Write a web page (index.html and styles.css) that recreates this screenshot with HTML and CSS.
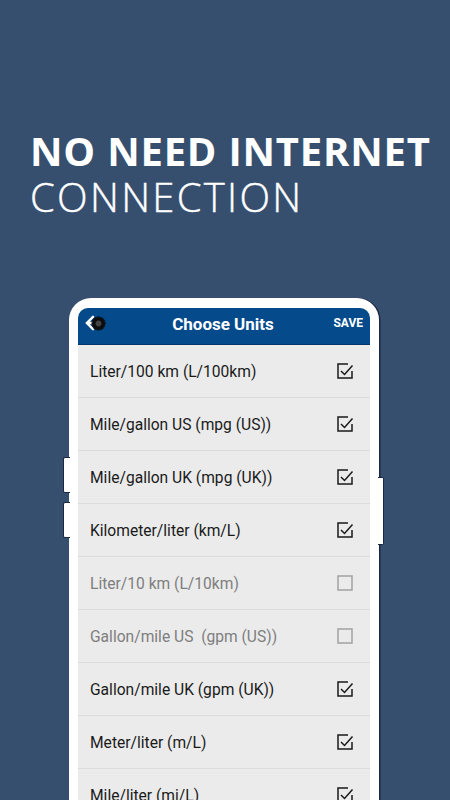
FILE: index.html
```html
<!DOCTYPE html>
<html>
<head>
<meta charset="utf-8">
<link rel="stylesheet" href="styles.css">
</head>
<body>
<div class="page">
  <h1 class="hero">
    <span class="hero-bold">NO NEED INTERNET</span>
    <span class="hero-light">CONNECTION</span>
  </h1>
  <div class="phone">
    <span class="side-btn left one"></span>
    <span class="side-btn left two"></span>
    <span class="side-btn right three"></span>
    <div class="screen">
      <div class="appbar">
        <svg class="back" width="16" height="16" viewBox="0 0 16 16"><path d="M8 1.8L1.8 8L8 14.2M1.8 8H15" fill="none" stroke="#fff" stroke-width="2.4" stroke-linecap="round" stroke-linejoin="round"/></svg>
        <span class="camera"></span>
        <span class="title">Choose Units</span>
        <span class="save">SAVE</span>
      </div>
      <ul class="list">
        <li class="row"><span class="label">Liter/100 km (L/100km)</span><svg class="cb" viewBox="0 0 18 18"><path d="M12 2H2V16H16V9" fill="none" stroke="#1a1a1a" stroke-width="1.5"/><path d="M5 9L8.5 12.5L16.5 3.5" fill="none" stroke="#1a1a1a" stroke-width="1.5"/></svg></li>
        <li class="row"><span class="label">Mile/gallon US (mpg (US))</span><svg class="cb" viewBox="0 0 18 18"><path d="M12 2H2V16H16V9" fill="none" stroke="#1a1a1a" stroke-width="1.5"/><path d="M5 9L8.5 12.5L16.5 3.5" fill="none" stroke="#1a1a1a" stroke-width="1.5"/></svg></li>
        <li class="row"><span class="label">Mile/gallon UK (mpg (UK))</span><svg class="cb" viewBox="0 0 18 18"><path d="M12 2H2V16H16V9" fill="none" stroke="#1a1a1a" stroke-width="1.5"/><path d="M5 9L8.5 12.5L16.5 3.5" fill="none" stroke="#1a1a1a" stroke-width="1.5"/></svg></li>
        <li class="row"><span class="label">Kilometer/liter (km/L)</span><svg class="cb" viewBox="0 0 18 18"><path d="M12 2H2V16H16V9" fill="none" stroke="#1a1a1a" stroke-width="1.5"/><path d="M5 9L8.5 12.5L16.5 3.5" fill="none" stroke="#1a1a1a" stroke-width="1.5"/></svg></li>
        <li class="row off"><span class="label">Liter/10 km (L/10km)</span><svg class="cb" viewBox="0 0 18 18"><rect x="2" y="2" width="14" height="14" fill="none" stroke="#a2a2a2" stroke-width="1.5"/></svg></li>
        <li class="row off"><span class="label">Gallon/mile US&nbsp; (gpm (US))</span><svg class="cb" viewBox="0 0 18 18"><rect x="2" y="2" width="14" height="14" fill="none" stroke="#a2a2a2" stroke-width="1.5"/></svg></li>
        <li class="row"><span class="label">Gallon/mile UK (gpm (UK))</span><svg class="cb" viewBox="0 0 18 18"><path d="M12 2H2V16H16V9" fill="none" stroke="#1a1a1a" stroke-width="1.5"/><path d="M5 9L8.5 12.5L16.5 3.5" fill="none" stroke="#1a1a1a" stroke-width="1.5"/></svg></li>
        <li class="row"><span class="label">Meter/liter (m/L)</span><svg class="cb" viewBox="0 0 18 18"><path d="M12 2H2V16H16V9" fill="none" stroke="#1a1a1a" stroke-width="1.5"/><path d="M5 9L8.5 12.5L16.5 3.5" fill="none" stroke="#1a1a1a" stroke-width="1.5"/></svg></li>
        <li class="row"><span class="label">Mile/liter (mi/L)</span><svg class="cb" viewBox="0 0 18 18"><path d="M12 2H2V16H16V9" fill="none" stroke="#1a1a1a" stroke-width="1.5"/><path d="M5 9L8.5 12.5L16.5 3.5" fill="none" stroke="#1a1a1a" stroke-width="1.5"/></svg></li>
      </ul>
    </div>
  </div>
</div>
</body>
</html>
```
FILE: styles.css
```css
html, body {
  margin: 0;
  padding: 0;
}
body {
  background: #364f6f;
  width: 450px;
  height: 800px;
  overflow: hidden;
}
.page {
  display: flex;
  flex-direction: column;
}
.hero {
  margin: 0;
  padding: 128px 0 0 30px;
  color: #fff;
  font-family: "Open Sans", sans-serif;
  font-size: 40px;
  line-height: 46px;
  display: flex;
  flex-direction: column;
}
.hero-bold {
  font-weight: 700;
  letter-spacing: 0.8px;
}
.hero-light {
  font-weight: 300;
  letter-spacing: 2.3px;
  -webkit-text-stroke: 0.4px #fff;
}
.phone {
  position: relative;
  margin: 78px 0 0 69px;
  width: 310px;
  box-sizing: border-box;
  padding: 10px 9px 0;
  background: #fff;
  border-radius: 22px 22px 0 0;
  box-shadow: 1.5px 0 0 #1c2744;
  height: 520px;
}
.side-btn {
  position: absolute;
  background: #fff;
  box-sizing: border-box;
  border: 1px solid #1c2744;
}
.side-btn.left {
  left: -6px;
  width: 7px;
  height: 36px;
  border-right: none;
  border-radius: 2px 0 0 2px;
}
.side-btn.one { top: 159px; }
.side-btn.two { top: 204px; }
.side-btn.right {
  right: -5px;
  width: 6px;
  height: 68px;
  top: 179px;
  border-left: none;
  border-radius: 0 2px 2px 0;
}
.screen {
  border-radius: 10px 10px 0 0;
  overflow: hidden;
  background: #ebebeb;
  height: 100%;
}
.appbar {
  position: relative;
  height: 36px;
  background: #054b8b;
  border-bottom: 1px solid #03376a;
  display: flex;
  align-items: center;
  justify-content: center;
  font-family: Roboto, sans-serif;
  color: #fff;
}
.back {
  position: absolute;
  left: 7px;
  top: 7px;
}
.camera {
  position: absolute;
  left: 14px;
  top: 9px;
  width: 13px;
  height: 13px;
  border-radius: 50%;
  background: radial-gradient(circle, #444 0, #444 25%, #0d0d0d 38%, #0d0d0d 100%);
  box-shadow: 0 0 0 0.5px #000;
}
.title {
  font-weight: 700;
  font-size: 17px;
  margin: 0 2px 5px 0;
}
.save {
  position: absolute;
  right: 7px;
  top: 8px;
  font-weight: 700;
  font-size: 12px;
}
.list {
  list-style: none;
  margin: 0;
  padding: 0;
}
.row {
  height: 52px;
  border-bottom: 1px solid #dcdcdc;
  display: flex;
  align-items: center;
  justify-content: space-between;
  padding: 0 16px 0 12px;
  font-family: Roboto, sans-serif;
  font-size: 15.6px;
  color: #1a1a1a;
}
.row.off {
  color: #7e7e7e;
}
.label {
  padding-top: 2px;
}
.cb {
  width: 18px;
  height: 18px;
  margin-top: -1px;
}
```
